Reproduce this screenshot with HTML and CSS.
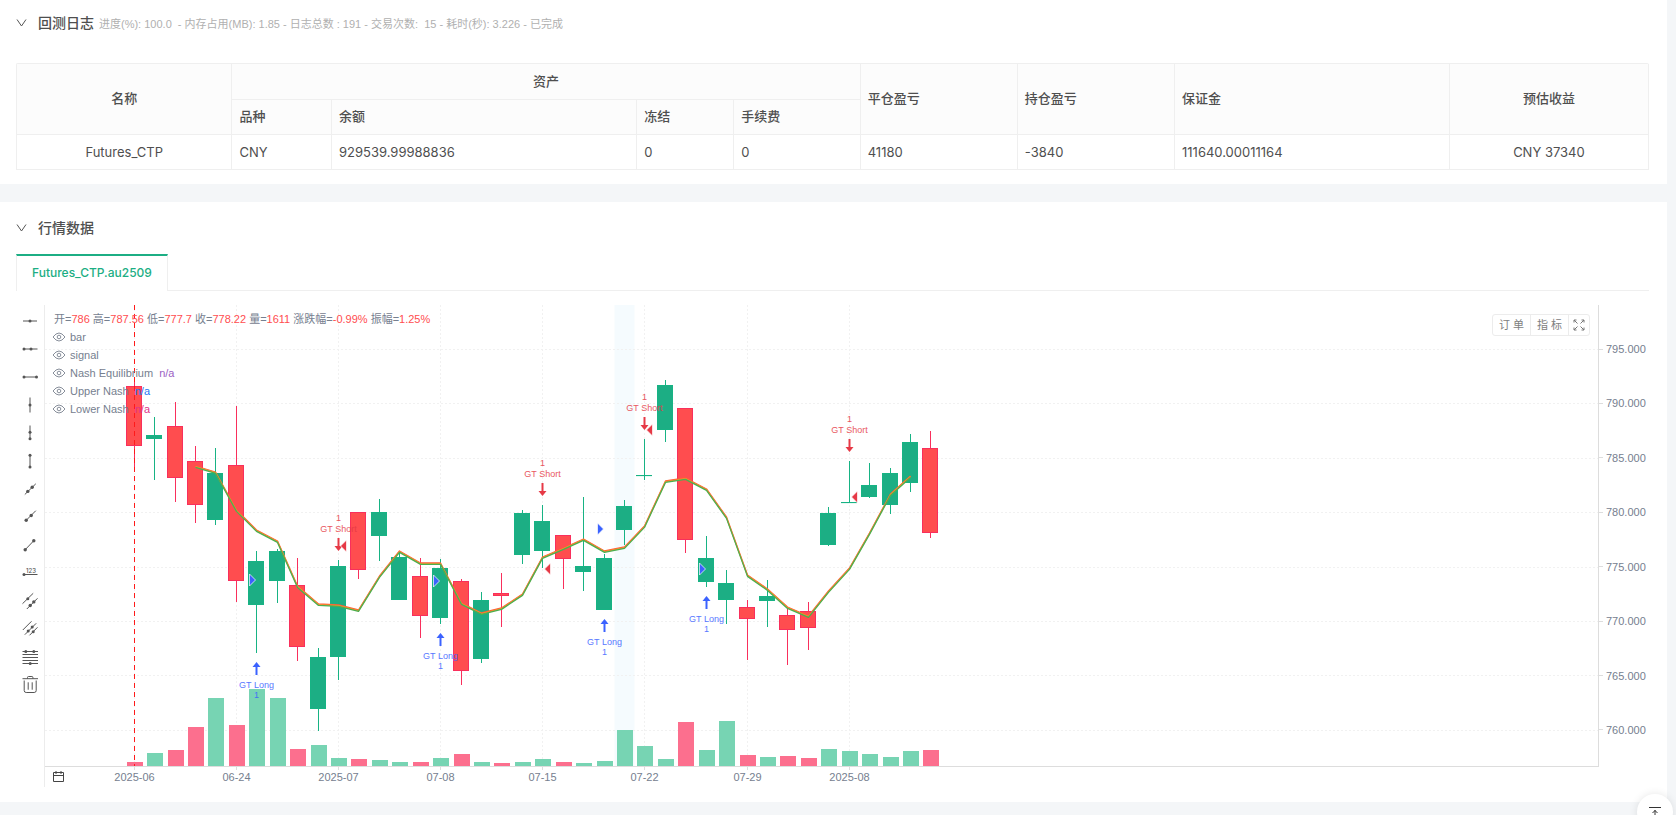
FILE: index.html
```html
<!DOCTYPE html>
<html lang="zh-CN">
<head>
<meta charset="utf-8">
<title>回测日志</title>
<link rel="stylesheet" href="styles.css">
</head>
<body>
<main class="page">
  <section class="card log-card">
    <header class="card-head">
      <button class="fold" aria-label="收起回测日志"><svg width="11" height="10" viewBox="0 0 11 10"><path d="M1 1.500l4.500 6.500 4.500-6.500"/></svg></button>
      <h2 class="card-title">回测日志</h2>
      <p class="card-note">进度(%): 100.0 &nbsp;- 内存占用(MB): 1.85 - 日志总数 : 191 - 交易次数: &nbsp;15 - 耗时(秒): 3.226 - 已完成</p>
    </header>
    <table class="assets">
      <colgroup>
        <col class="c-name"><col class="c-kind"><col class="c-balance"><col class="c-frozen"><col class="c-fee"><col class="c-pnl"><col class="c-pnl"><col class="c-margin"><col class="c-profit">
      </colgroup>
      <thead>
        <tr>
          <th rowspan="2" class="center">名称</th>
          <th colspan="4" class="center">资产</th>
          <th rowspan="2">平仓盈亏</th>
          <th rowspan="2">持仓盈亏</th>
          <th rowspan="2">保证金</th>
          <th rowspan="2" class="center">预估收益</th>
        </tr>
        <tr><th>品种</th><th>余额</th><th>冻结</th><th>手续费</th></tr>
      </thead>
      <tbody>
        <tr>
          <td class="center">Futures_CTP</td><td>CNY</td><td>929539.99988836</td><td>0</td><td>0</td><td>41180</td><td>-3840</td><td>111640.00011164</td><td class="center">CNY 37340</td>
        </tr>
      </tbody>
    </table>
  </section>

  <section class="card market-card">
    <header class="card-head">
      <button class="fold" aria-label="收起行情数据"><svg width="11" height="10" viewBox="0 0 11 10"><path d="M1 1.500l4.500 6.500 4.500-6.500"/></svg></button>
      <h2 class="card-title">行情数据</h2>
    </header>
    <nav class="tabs"><button class="tab">Futures_CTP.au2509</button></nav>

    <div class="chart">
      <div class="tools">
        <button aria-label="水平直线"><svg viewBox="0 0 20 20"><path d="M3 10h14"/><circle cx="10" cy="10" r="1.5"/></svg></button>
        <button aria-label="水平射线"><svg viewBox="0 0 20 20"><path d="M4 10h13.500"/><circle cx="4" cy="10" r="1.500"/><circle cx="11" cy="10" r="1.500"/></svg></button>
        <button aria-label="水平线段"><svg viewBox="0 0 20 20"><path d="M4 10h12"/><circle cx="4" cy="10" r="1.500"/><circle cx="16.500" cy="10" r="1.500"/></svg></button>
        <button aria-label="垂直直线"><svg viewBox="0 0 20 20"><path d="M10 2.500v15"/><circle cx="10" cy="10" r="1.500"/></svg></button>
        <button aria-label="垂直射线"><svg viewBox="0 0 20 20"><path d="M10 2.500v14"/><circle cx="10" cy="9.300" r="1.500"/><circle cx="10" cy="15.800" r="1.500"/></svg></button>
        <button aria-label="垂直线段"><svg viewBox="0 0 20 20"><path d="M10 4v12"/><circle cx="10" cy="4.200" r="1.500"/><circle cx="10" cy="16" r="1.500"/></svg></button>
        <button aria-label="直线"><svg viewBox="0 0 20 20"><path d="M4.800 15.500L15.800 4.800"/><circle cx="7.800" cy="12.400" r="1.700"/><circle cx="12.200" cy="8.200" r="1.700"/></svg></button>
        <button aria-label="射线"><svg viewBox="0 0 20 20"><path d="M6.200 13.300L15.800 3.700"/><circle cx="6.200" cy="13.300" r="1.700"/><circle cx="11.200" cy="8.500" r="1.700"/></svg></button>
        <button aria-label="线段"><svg viewBox="0 0 20 20"><path d="M5.200 14.700L13.800 5.700"/><circle cx="5.200" cy="14.700" r="1.700"/><circle cx="13.800" cy="5.700" r="1.700"/></svg></button>
        <button aria-label="价格线"><svg viewBox="0 0 20 20"><path d="M3 11.500h14.500"/><circle cx="4" cy="11.500" r="1.500"/><text x="6" y="10">123</text></svg></button>
        <button aria-label="价格通道线"><svg viewBox="0 0 20 20"><path d="M2.500 12.700L13.200 2.300M6.800 18L17.500 7.300"/><circle cx="7.800" cy="7.700" r="1.500"/><circle cx="10.200" cy="14.500" r="1.700"/><circle cx="13.800" cy="10.900" r="1.700"/></svg></button>
        <button aria-label="平行直线"><svg viewBox="0 0 20 20"><path d="M2.800 11L11.500 2.300M4.800 15.700L16.200 4.300M9.500 16.300L17.500 8.300"/><circle cx="8.200" cy="12" r="1.500"/><circle cx="12.200" cy="8.100" r="1.500"/><circle cx="13.200" cy="12.700" r="1.500"/></svg></button>
        <button aria-label="斐波那契回调"><svg viewBox="0 0 20 20"><path d="M2.500 4.500H18M2.500 7.500H18M2.500 10.500H18M2.500 13.500H18M2.500 16.500H18"/><circle cx="5.800" cy="4.500" r="1.500"/><circle cx="13.800" cy="4.500" r="1.500"/><circle cx="10.200" cy="16.500" r="1.500"/></svg></button>
        <button aria-label="清除"><svg class="trash" viewBox="0 0 20 20"><path d="M2.500 3.700H18M7.500 3.700V2.500q0-1 1-1h3.400q1 0 1 1V3.700M4.200 5.500v10q0 2 2 2h8q2 0 2-2v-10M8.200 7.300v7.400M12.200 7.300v7.400"/></svg></button>
      </div>

      <div class="stage">
        <svg class="plot" id="plot" role="img" aria-label="K线图"></svg>
        <ul class="legend">
          <li class="ohlc">开=<b>786</b> 高=<b>787.56</b> 低=<b>777.7</b> 收=<b>778.22</b> 量=<b>1611</b> 涨跌幅=<b>-0.99%</b> 振幅=<b>1.25%</b></li>
          <li><svg class="eye" viewBox="0 0 14 10"><path d="M1 5q6-8 12 0q-6 8-12 0z"/><circle cx="7" cy="5" r="1.800"/></svg>bar</li>
          <li><svg class="eye" viewBox="0 0 14 10"><path d="M1 5q6-8 12 0q-6 8-12 0z"/><circle cx="7" cy="5" r="1.800"/></svg>signal</li>
          <li><svg class="eye" viewBox="0 0 14 10"><path d="M1 5q6-8 12 0q-6 8-12 0z"/><circle cx="7" cy="5" r="1.800"/></svg>Nash Equilibrium<i class="v-nash">n/a</i></li>
          <li><svg class="eye" viewBox="0 0 14 10"><path d="M1 5q6-8 12 0q-6 8-12 0z"/><circle cx="7" cy="5" r="1.800"/></svg>Upper Nash<i class="v-upper">n/a</i></li>
          <li><svg class="eye" viewBox="0 0 14 10"><path d="M1 5q6-8 12 0q-6 8-12 0z"/><circle cx="7" cy="5" r="1.800"/></svg>Lower Nash<i class="v-lower">n/a</i></li>
        </ul>
        <div class="actions">
          <button>订 单</button><button>指 标</button><button class="full" aria-label="全屏"><svg width="12" height="12" viewBox="0 0 12 12"><path d="M1 1l3.500 3.500M11 1L7.500 4.500M1 11l3.500-3.500M11 11L7.500 7.500"/><path d="M1 3.500V1h2.500M8.500 1H11v2.500M1 8.500V11h2.500M8.500 11H11V8.500"/></svg></button>
        </div>
        <div class="time-axis">
          <button class="calendar" aria-label="选择日期"><svg width="13" height="13" viewBox="0 0 13 13"><path d="M1.500 2.500h10v9h-10zM1.500 5.500h10M4 1v3M9 1v3"/></svg></button>
          <svg class="time-labels" id="time"></svg>
        </div>
      </div>

      <ul class="price-axis" id="price"></ul>
    </div>
  </section>
  <button class="to-top" aria-label="回到顶部"><svg width="14" height="14" viewBox="0 0 14 14"><path d="M1 1.500h12M7 4v9M4.500 7L7 4.500 9.500 7"/></svg></button>
</main>
<script src="chart.js"></script>
</body>
</html>
```
FILE: styles.css
```css
* { box-sizing: border-box; }
body { margin: 0; background: #f4f6f8; color: #4f4f4f; font: 13px/20px Inter, "Noto Sans CJK SC", sans-serif; }
button { margin: 0; padding: 0; border: 0; background: none; font: inherit; color: inherit; }
h2, p, ul { margin: 0; padding: 0; list-style: none; }
.page { min-height: 100vh; padding-right: 9px; overflow: hidden; }
.card { background: #fff; padding-left: 16px; padding-right: 18px; }
.log-card { padding-top: 12px; padding-bottom: 14px; margin-bottom: 18px; }
.market-card { padding-top: 15px; padding-bottom: 15px; }

.card-head { display: flex; align-items: center; height: 22px; }
.fold { display: flex; width: 22px; }
.fold svg { fill: none; stroke: #555; stroke-width: 1; }
.card-title { font-size: 14px; line-height: 22px; font-weight: 500; }
.card-note { margin-left: 5px; padding-top: 2px; font-family: "Liberation Sans", "Noto Sans CJK SC", sans-serif; font-size: 11px; line-height: 20px; color: #b0b0b0; white-space: nowrap; }

.assets { width: 100%; margin-top: 29px; table-layout: fixed; border-spacing: 0; border-top: 1px solid #efefef; border-left: 1px solid #efefef; border-radius: 2px 2px 0 0; }
.assets th, .assets td { height: 35px; padding: 0 7px; border-right: 1px solid #efefef; border-bottom: 1px solid #efefef; text-align: left; font-weight: 400; }
.assets th { padding-bottom: 2px; background: #fcfcfc; font-weight: 500; }
.assets thead tr:first-child th { height: 36px; }
.assets .center { text-align: center; }
.c-name { width: 13.2%; }
.c-kind { width: 6.1%; }
.c-balance { width: 18.7%; }
.c-frozen { width: 5.95%; }
.c-fee { width: 7.75%; }
.c-pnl { width: 9.63%; }
.c-margin { width: 16.84%; }
.c-profit { width: 12.2%; }

.tabs { display: flex; margin-top: 15px; height: 37px; border-bottom: 1px solid #efefef; }
.tab { height: 37px; padding: 0 15px 2px; background: #fff; border: 1px solid #efefef; border-top: 2px solid #1cae84; border-bottom: 0; color: #1cae84; font-size: 12px; font-weight: 500; }

.chart { display: flex; margin-top: 14px; }
.tools { display: flex; flex-direction: column; width: 28px; padding-top: 2px; }
.tools button { display: flex; justify-content: center; align-items: center; height: 28px; width: 27px; }
.tools svg { width: 20px; height: 20px; fill: #555; stroke: #555; stroke-width: 1; }
.tools circle { stroke: none; }
.tools .trash { fill: none; }
.tools text { stroke: none; font-size: 6px; font-weight: 500; }
.stage { position: relative; flex: 1; min-width: 0; border-left: 1px solid #ececec; font-family: "Liberation Sans", "Noto Sans CJK SC", sans-serif; }
.plot { display: block; width: 100%; height: 462px; border-right: 1px solid #ddd; border-bottom: 1px solid #ddd; }

.legend { position: absolute; top: 5px; left: 9px; font-size: 11px; line-height: 18px; color: #76808f; }
.legend li { display: flex; align-items: center; height: 18px; }
.legend .ohlc { display: block; white-space: nowrap; }
.legend b { font-weight: 400; color: #ff4d4f; }
.legend i { font-style: normal; margin-left: 6px; }
.eye { width: 14px; height: 10px; margin-right: 4px; margin-left: -2px; fill: none; stroke: #888f9b; stroke-width: 1; }
.v-nash { color: #9c5fc4; }
.v-upper { color: #2478f5; }
.v-lower { color: #e0358a; }

.actions { position: absolute; top: 9px; right: 9px; display: flex; height: 22px; border: 1px solid #ececec; border-radius: 3px; background: #fff; color: #808080; font-size: 11px; }
.actions button { width: 38px; border-right: 1px solid #ececec; }
.actions .full { display: flex; align-items: center; justify-content: center; width: 20px; border: 0; }
.actions svg { fill: none; stroke: #777; stroke-width: 1; }

.time-axis { position: relative; height: 20px; }
.time-labels { display: block; width: 100%; height: 20px; }
.calendar { position: absolute; left: 7px; top: 3px; display: flex; }
.calendar svg { fill: none; stroke: #444; stroke-width: 1; }
.price-axis { display: flex; flex-direction: column; justify-content: space-between; width: 50px; height: 434px; padding-top: 35px; font-family: "Liberation Sans", sans-serif; font-size: 11px; line-height: 18px; color: #76808f; }
.price-axis li { display: flex; align-items: center; height: 18px; }
.price-axis li::before { content: ""; width: 4px; margin-right: 3px; border-top: 1px solid #ddd; }

.to-top { position: fixed; right: 3px; bottom: -15px; display: flex; justify-content: center; width: 36px; height: 36px; padding-top: 12px; border-radius: 50%; background: #fff; box-shadow: 0 0 8px rgba(0, 0, 0, .1); }
.to-top svg { fill: none; stroke: #333; stroke-width: 1; }

.grid { stroke: #f1f1f1; stroke-dasharray: 2 2; }
.cursor { stroke: #ff1a1a; stroke-dasharray: 5 4; }
.band { fill: #f5fbfe; }
.up { fill: #1cae84; stroke: #17b384; }
.down { fill: #ff4d4f; stroke: #f92f5c; }
.vol-up { fill: #77d4b3; }
.vol-down { fill: #fc6f8e; }
.line { fill: none; stroke-width: 1.3; stroke-linejoin: round; }
.line-upper { stroke: #ff5a36; }
.line-mid { stroke: #f9902c; }
.line-lower { stroke: #4caf50; }
.short { fill: #e63946; }
.long { fill: #3b62ff; }
.stem { stroke-width: 2; fill: none; }
.short-stem { stroke: #e63946; }
.long-stem { stroke: #3b62ff; }
.mark-text { font-size: 9px; text-anchor: middle; opacity: .85; }
.fill-mark { stroke: #fff; stroke-opacity: .7; }
.tick-text { font-size: 11px; text-anchor: middle; fill: #76808f; }
.tick { stroke: #ddd; }
```
FILE: chart.js
```js
// Candle rows: direction, wick top, body top, body bottom, wick bottom, volume height
const candles = [
  ['d', 75, 81, 141, 166, 4], ['u', 112, 130, 134, 175, 13], ['d', 97, 121, 173, 197, 16], ['d', 141, 156, 200, 218, 39],
  ['u', 143, 168, 215, 220, 68], ['d', 101, 160, 276, 297, 41], ['u', 246, 256, 300, 348, 77], ['u', 244, 246, 276, 298, 68],
  ['d', 253, 280, 342, 356, 17], ['u', 343, 352, 404, 426, 21], ['u', 255, 261, 352, 375, 8], ['d', 207, 207, 265, 274, 7],
  ['u', 194, 207, 231, 256, 6], ['u', 246, 252, 295, 295, 4], ['d', 253, 271, 311, 333, 4], ['u', 254, 263, 313, 319, 8],
  ['d', 274, 276, 366, 380, 12], ['u', 287, 295, 354, 358, 4], ['d', 268, 288, 291, 322, 3], ['u', 205, 208, 250, 259, 4],
  ['u', 200, 216, 246, 263, 7], ['d', 230, 230, 254, 284, 4], ['u', 192, 261, 267, 286, 3], ['u', 249, 253, 305, 305, 5],
  ['u', 195, 201, 225, 240, 36], ['u', 134, 170, 171, 175, 20], ['u', 75, 80, 125, 137, 7], ['d', 103, 103, 235, 248, 44],
  ['u', 231, 253, 277, 282, 16], ['u', 265, 278, 295, 319, 45], ['d', 295, 302, 314, 355, 11], ['u', 275, 291, 296, 322, 9],
  ['d', 304, 310, 325, 360, 10], ['d', 297, 306, 323, 345, 8], ['u', 202, 208, 240, 241, 17], ['u', 156, 197, 198, 198, 15],
  ['u', 158, 180, 192, 193, 12], ['u', 163, 168, 200, 209, 9], ['u', 129, 137, 178, 187, 15], ['d', 126, 143, 228, 233, 16]
];
// Equilibrium line, one value per candle from the fourth on
const line = [161, 167, 205, 225, 236, 281, 299, 300, 305, 271, 246, 258, 258, 298, 308, 303, 289, 252, 243, 234,
  246, 242, 221, 176, 173, 184, 212, 270, 284, 302, 311, 286, 263, 228, 189, 171];
// Signals: candle index, label y, triangle y
const shorts = [[10, 213, 241], [20, 158, 264], [25, 92, 125], [35, 114, 192]];
const longs = [[6, 357, 275], [15, 328, 276], [23, 314, 224], [28, 291, 264]];
const dates = ['2025-06', '06-24', '2025-07', '07-08', '07-15', '07-22', '07-29', '2025-08'];
const prices = ['795.000', '790.000', '785.000', '780.000', '775.000', '770.000', '765.000', '760.000'];
const base = 461;
const xAt = i => Math.round(88.7 + 20.43 * i) + 0.5;

const out = [];
out.push(`<rect class="band" x="${xAt(24) - 10}" y="0" width="20" height="${base}"/>`);
prices.forEach((p, i) => {
  const y = Math.round(44 + 54.4 * i) + 0.5;
  out.push(`<line class="grid" x1="0" x2="100%" y1="${y}" y2="${y}"/>`);
});
dates.forEach((d, i) => out.push(`<line class="grid" x1="${xAt(i * 5)}" x2="${xAt(i * 5)}" y1="0" y2="${base}"/>`));
candles.forEach(([dir, , , , , v], i) => {
  out.push(`<rect class="vol-${dir === 'u' ? 'up' : 'down'}" x="${xAt(i) - 7.5}" y="${base - v}" width="16" height="${v}"/>`);
});
candles.forEach(([dir, hi, top, bottom, lo], i) => {
  const x = xAt(i), c = dir === 'u' ? 'up' : 'down';
  out.push(`<line class="${c}" x1="${x}" x2="${x}" y1="${hi}" y2="${lo}"/>`);
  out.push(`<rect class="${c}" x="${x - 8}" y="${top + 0.5}" width="15" height="${Math.max(bottom - top - 1, 0.1)}"/>`);
});
[['upper', 0], ['mid', 0.6], ['lower', 1.4]].forEach(([name, dy]) => {
  const pts = line.map((y, i) => `${xAt(i + 3)},${y + dy}`).join(' ');
  out.push(`<polyline class="line line-${name}" points="${pts}"/>`);
});
shorts.forEach(([i, y, t]) => {
  const x = xAt(i);
  out.push(`<text class="mark-text short" x="${x}" y="${y + 3}">1</text><text class="mark-text short" x="${x}" y="${y + 14}">GT Short</text>`);
  out.push(`<path class="stem short-stem" d="M${x} ${y + 20}v10"/><path class="short" d="M${x - 4} ${y + 28}h8l-4 5z"/>`);
  out.push(`<path class="short fill-mark" d="M${x + 2} ${t}l6-6v12z"/>`);
});
longs.forEach(([i, y, t]) => {
  const x = xAt(i);
  out.push(`<path class="stem long-stem" d="M${x} ${y + 13}v-10"/><path class="long" d="M${x - 4} ${y + 5}h8l-4-5z"/>`);
  out.push(`<text class="mark-text long" x="${x}" y="${y + 26}">GT Long</text><text class="mark-text long" x="${x}" y="${y + 36}">1</text>`);
  out.push(`<path class="long fill-mark" d="M${x - 7} ${t - 6}l6 6l-6 6z"/>`);
});
out.push(`<line class="cursor" x1="${xAt(0)}" x2="${xAt(0)}" y1="0" y2="${base}"/>`);
document.getElementById('plot').innerHTML = out.join('');

document.getElementById('time').innerHTML = dates.map((d, i) =>
  `<line class="tick" x1="${xAt(i * 5)}" x2="${xAt(i * 5)}" y1="0" y2="3"/><text class="tick-text" x="${xAt(i * 5)}" y="14">${d}</text>`).join('');
document.getElementById('price').innerHTML = prices.map(p => `<li>${p}</li>`).join('');
```
